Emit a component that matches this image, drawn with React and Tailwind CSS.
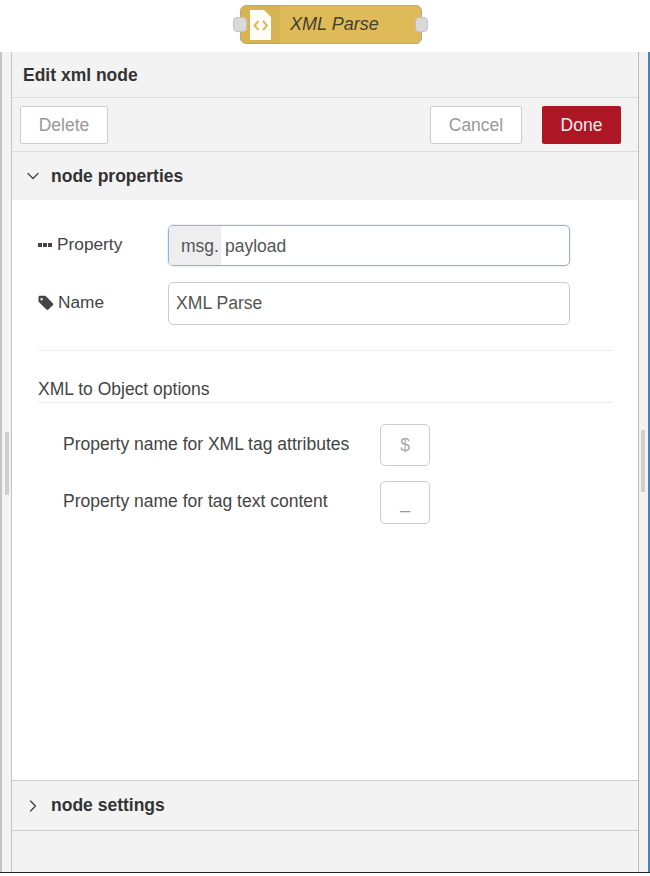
import { ChevronDown, ChevronRight } from 'lucide-react';

function TagIcon() {
  return (
    <svg width="16" height="16" viewBox="0 0 16 16" className="fill-[#444]">
      <path d="M0.5 2.200 C0.500 1.400 1.100 0.800 1.900 0.800 H6.600 C7.100 0.800 7.500 1 7.900 1.300 L14.800 8.200 C15.400 8.800 15.400 9.600 14.800 10.200 L10.400 14.400 C9.800 15 9 15 8.400 14.400 L1.100 7.200 C0.700 6.800 0.500 6.400 0.500 5.900 Z M3.600 3 a1.200 1.200 0 1 0 0.010 0 Z" fillRule="evenodd" />
    </svg>
  );
}

function FlowNode() {
  return (
    <div className="relative w-[182px] h-[39px]">
      <div className="w-full h-full flex rounded-[6px] border border-[#b0a78c] bg-[#debb58] overflow-hidden">
        <div className="w-[39px] shrink-0 flex items-center justify-center bg-[#d8b353]">
          <svg width="21" height="30" viewBox="0 0 21 30">
            <path d="M0 0 H14 L21 7 V30 H0 Z" fill="#fffdf5" />
            <path d="M8.500 11 L4.500 15.500 L8.500 20 M13 11 L17 15.500 L13 20" fill="none" stroke="#dcb95c" strokeWidth="2" />
          </svg>
        </div>
        <span className="pl-[10px] leading-[37px] text-[18px] italic text-[#423f30]">XML Parse</span>
      </div>
      <div className="absolute -left-[7px] top-[12px] w-[14px] h-[15px] rounded-[4px] bg-[#d9d9d9] border border-[#c4c4c4]" />
      <div className="absolute -right-[6px] top-[12px] w-[13px] h-[15px] rounded-[4px] bg-[#d9d9d9] border border-[#c4c4c4]" />
    </div>
  );
}

function Gutter({ className, gripClass }) {
  return (
    <div className={`shrink-0 bg-[#f3f3f3] ${className}`}>
      <div className={`w-[4px] bg-[#cfcfcf] ${gripClass}`} />
    </div>
  );
}

export default function App() {
  return (
    <div className="w-[650px] h-[876px] bg-white flex flex-col overflow-hidden font-['Liberation_Sans',Arial,sans-serif] text-[#444]">
      <div className="h-[52px] shrink-0 flex items-start justify-center pt-[5px] pl-[12px]">
        <FlowNode />
      </div>

      <div className="h-[821px] shrink-0 flex border-b-[1px] border-[#222]">
        <Gutter className="w-[12px] pl-[3px] pt-[380px] border-l-[2px] border-r border-[#c4c4c4]" gripClass="h-[63px]" />

        <div className="w-[626px] shrink-0 flex flex-col">
          <div className="h-[46px] shrink-0 bg-[#f3f3f3] border-b border-[#ddd] pl-[11px] leading-[46px] text-[17.5px] font-bold text-[#333]">
            Edit xml node
          </div>

          <div className="h-[54px] shrink-0 bg-[#f3f3f3] border-b border-[#ddd] flex items-center justify-between pl-[8px] pr-[17px]">
            <button className="w-[88px] h-[38px] mt-[1px] pt-[1px] bg-white border border-[#ccc] rounded-[2px] text-[17.5px] text-[#999]">Delete</button>
            <div className="flex items-center gap-[20px]">
              <button className="w-[92px] h-[38px] pt-[1px] bg-white border border-[#ccc] rounded-[2px] text-[17.5px] text-[#999]">Cancel</button>
              <button className="w-[79px] h-[38px] pt-[1px] bg-[#ad1625] rounded-[2px] text-[17.5px] text-[#eee]">Done</button>
            </div>
          </div>

          <div className="h-[48px] shrink-0 bg-[#f3f3f3] flex items-center pl-[11px]">
            <ChevronDown size={20} strokeWidth={1.5} className="text-[#444]" />
            <span className="ml-[8px] text-[17.5px] font-bold text-[#333]">node properties</span>
          </div>

          <div className="h-[580px] shrink-0 bg-white pt-[25px] pl-[26px] pr-[25px]">
            <div className="flex items-center h-[41px]">
              <label className="w-[130px] flex items-center text-[17.3px] -mt-[2px]">
                <span className="w-[15px] h-[4px] mr-[4px] flex gap-[1px]">
                  <i className="w-[4px] h-[4px] bg-[#444]" />
                  <i className="w-[4px] h-[4px] bg-[#444]" />
                  <i className="w-[4px] h-[4px] bg-[#444]" />
                </span>
                Property
              </label>
              <div className="w-[402px] h-[41px] flex rounded-[5px] border border-[#8fb5d6] shadow-[0_0_2px_#b5cfe4] overflow-hidden text-[17.5px]">
                <span className="w-[52px] bg-[#eee] pl-[12px] leading-[40px] text-[#555]">msg.</span>
                <span className="pl-[4px] leading-[40px] text-[#555]">payload</span>
              </div>
            </div>

            <div className="flex items-center h-[43px] mt-[16px]">
              <label className="w-[130px] flex items-center text-[17.3px] -mt-[2px]">
                <span className="w-[20px]"><TagIcon /></span>
                Name
              </label>
              <div className="w-[402px] h-[43px] rounded-[5px] border border-[#ccc] pl-[7px] leading-[40px] text-[17.6px] text-[#555]">XML Parse</div>
            </div>

            <div className="h-[1px] bg-[#eee] mt-[25px]" />
            <div className="mt-[27px] text-[17.5px] leading-[22px] text-[#444]">XML to Object options</div>
            <div className="h-[1px] bg-[#eee] mt-[2px]" />

            <div className="flex items-center h-[42px] mt-[21px] pl-[25px]">
              <span className="w-[317px] text-[17.5px] -mt-[2px]">Property name for XML tag attributes</span>
              <div className="w-[50px] h-[42px] rounded-[5px] border border-[#ccc] flex items-center justify-center text-[17.5px] text-[#aaa]">$</div>
            </div>
            <div className="flex items-center h-[43px] mt-[15px] pl-[25px]">
              <span className="w-[317px] text-[17.5px] -mt-[2px]">Property name for tag text content</span>
              <div className="w-[50px] h-[43px] rounded-[5px] border border-[#ccc] flex items-center justify-center text-[17.5px] text-[#999]">_</div>
            </div>
          </div>

          <div className="h-[51px] shrink-0 bg-[#f3f3f3] border-y-[1.5px] border-[#ccc] flex items-center pl-[11px]">
            <ChevronRight size={20} strokeWidth={1.5} className="text-[#444]" />
            <span className="ml-[8px] text-[17.5px] font-bold text-[#333]">node settings</span>
          </div>

          <div className="flex-1 bg-[#f3f3f3]" />
        </div>

        <Gutter className="w-[12px] pt-[378px] pl-[2px] border-l border-r-[2px] border-l-[#bbb] border-r-[#3f87bb]" gripClass="h-[62px]" />
      </div>
    </div>
  );
}
